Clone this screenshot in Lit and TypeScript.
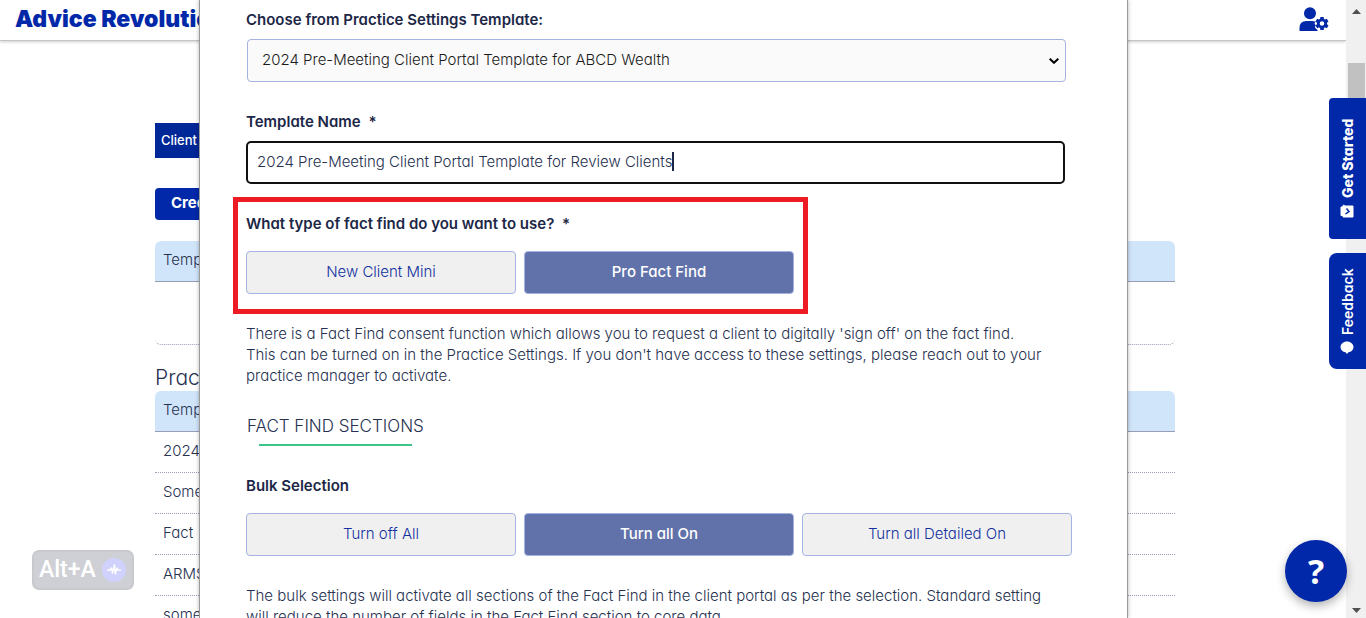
import { LitElement, html, css, svg } from "lit";
import { customElement, property, state } from "lit/decorators.js";
import { classMap } from "lit/directives/class-map.js";

const base = css`
  * {
    box-sizing: border-box;
  }
  button,
  input,
  select {
    font: inherit;
    color: inherit;
    margin: 0;
  }
  h1,
  h2,
  p {
    margin: 0;
    font-weight: inherit;
  }
`;

@customElement("choice-group")
class ChoiceGroup extends LitElement {
  @property({ attribute: false }) options: string[] = [];
  @property() value = "";
  @property({ type: Number }) columns = 3;

  static styles = [
    base,
    css`
      :host {
        display: block;
      }
      .row {
        display: grid;
        gap: 8px;
      }
      .two {
        grid-template-columns: repeat(2, 1fr);
      }
      .three {
        grid-template-columns: repeat(3, 1fr);
      }
      .choice {
        height: 43px;
        padding: 0 8px 2px;
        border: 1px solid #a4b3e2;
        border-radius: 4px;
        background: #f0f0f0;
        color: #12309f;
        cursor: pointer;
      }
      .choice.on {
        background: #6072a9;
        color: #fff;
        font-weight: 500;
      }
    `,
  ];

  render() {
    return html`<div
      class=${classMap({ row: true, two: this.columns === 2, three: this.columns === 3 })}
      role="group"
    >
      ${this.options.map(
        (o) => html`<button
          type="button"
          class=${classMap({ choice: true, on: o === this.value })}
          aria-pressed=${o === this.value}
          @click=${() => (this.value = o)}
        >${o}</button>`
      )}
    </div>`;
  }
}

@customElement("template-dialog")
class TemplateDialog extends LitElement {
  @state() name = "2024 Pre-Meeting Client Portal Template for Review Clients";

  static styles = [
    base,
    css`
      :host {
        display: block;
        background: #fff;
        border: solid #9a9a9a;
        border-width: 0 1px;
        box-shadow: 0 0 4px rgba(0, 0, 0, 0.3);
        overflow: hidden;
        padding: 9px 55px 0 46px;
        font-size: 15px;
        line-height: 21px;
        color: #263150;
      }
      form {
        display: flex;
        flex-direction: column;
        gap: 30px;
      }
      .field {
        display: flex;
        flex-direction: column;
        gap: 9px;
        margin-right: 7px;
      }
      .field + .field,
      .marked {
        margin-top: -1px;
      }
      .label {
        display: block;
        font-size: 15px;
        font-weight: 600;
        color: #1c2747;
      }
      .star {
        margin-left: 4px;
      }
      .picker {
        display: grid;
        align-items: center;
        margin: 0 -1px 0 1px;
      }
      .picker > * {
        grid-area: 1 / 1;
      }
      .picker select {
        appearance: none;
        width: 100%;
        height: 43px;
        padding: 0 32px 2px 14px;
        border: 1px solid #a4b3e2;
        border-radius: 4px;
        background: #fafafa;
        color: #1a1a1a;
      }
      .picker svg {
        justify-self: end;
        margin-right: 7px;
        pointer-events: none;
      }
      .textbox {
        display: flex;
        align-items: center;
        height: 43px;
        padding: 0 9px 2px;
        border: 2px solid #101010;
        border-radius: 5px;
      }
      .textbox input {
        field-sizing: content;
        border: 0;
        padding: 0;
        outline: 0;
        background: none;
        max-width: 100%;
      }
      .caret {
        width: 2px;
        height: 19px;
        background: #1c2747;
      }
      .group {
        display: flex;
        flex-direction: column;
        gap: 17px;
      }
      .marked {
        position: relative;
        width: calc((100% - 16px) * 2 / 3 + 8px);
      }
      .marked::after {
        content: "";
        position: absolute;
        inset: -16px -14px -20px -13px;
        border: 5px solid #ed1c24;
        pointer-events: none;
      }
      .note {
        margin-top: -1px;
      }
      .sections {
        align-self: flex-start;
        margin-top: -2px;
        padding-left: 1px;
        font-size: 17px;
        line-height: 24px;
      }
      .sections::after {
        content: "";
        display: block;
        height: 2px;
        margin: 6px 12px 0;
        background: #3cc48a;
      }
      .sections + .group {
        margin-top: -1px;
      }
    `,
  ];

  render() {
    return html`<form @submit=${(e: Event) => e.preventDefault()}>
      <div class="field">
        <label class="label" for="source">Choose from Practice Settings Template:</label>
        <div class="picker">
          <select id="source">
            <option>2024 Pre-Meeting Client Portal Template for ABCD Wealth</option>
          </select>
          <svg width="10" height="6" viewBox="0 0 10 6" fill="none" stroke="#000" stroke-width="2">
            <path d="M.7.7 5 4.8 9.3.7" />
          </svg>
        </div>
      </div>
      <div class="field">
        <label class="label" for="name">Template Name <span class="star">*</span></label>
        <div class="textbox">
          <input
            id="name"
            type="text"
            required
            .value=${this.name}
            @input=${(e: Event) => (this.name = (e.target as HTMLInputElement).value)}
          /><span class="caret"></span>
        </div>
      </div>
      <div class="group marked">
        <span class="label">What type of fact find do you want to use? <span class="star">*</span></span>
        <choice-group
          .columns=${2}
          .options=${["New Client Mini", "Pro Fact Find"]}
          value="Pro Fact Find"
        ></choice-group>
      </div>
      <p class="note">
        There is a Fact Find consent function which allows you to request a client to digitally 'sign off' on the fact find.<br />
        This can be turned on in the Practice Settings. If you don't have access to these settings, please reach out to your<br />
        practice manager to activate.
      </p>
      <h2 class="sections">FACT FIND SECTIONS</h2>
      <div class="group">
        <span class="label">Bulk Selection</span>
        <choice-group
          .columns=${3}
          .options=${["Turn off All", "Turn all On", "Turn all Detailed On"]}
          value="Turn all On"
        ></choice-group>
      </div>
      <p class="note">
        The bulk settings will activate all sections of the Fact Find in the client portal as per the selection. Standard setting<br />
        will reduce the number of fields in the Fact Find section to core data.
      </p>
    </form>`;
  }
}

const teeth = [0, 60, 120, 180, 240, 300].map(
  (a) => svg`<rect x="21.2" y="9.9" width="3.6" height="4" rx=".6" transform="rotate(${a} 23 16.5)"/>`
);

@customElement("app-root")
class AppRoot extends LitElement {
  static styles = [
    base,
    css`
      :host {
        display: flex;
        position: relative;
        height: 100vh;
        overflow: hidden;
        background: #fff;
        color: #263150;
        font-family: Inter, "Open Sans", sans-serif;
        font-feature-settings: "cv11";
        font-size: 15px;
        font-weight: 300;
        line-height: 20px;
      }
      .page {
        flex: 1;
        min-width: 0;
      }
      header {
        display: flex;
        align-items: center;
        justify-content: space-between;
        height: 41px;
        padding: 0 16px 2px 15px;
        border-bottom: 1px solid #c4c4c4;
        box-shadow: 0 1px 3px rgba(0, 0, 0, 0.2);
      }
      .brand {
        font-size: 23px;
        line-height: 28px;
        font-weight: 900;
        color: #0028a8;
        text-decoration: none;
      }
      .account {
        display: flex;
        border: 0;
        padding: 0;
        background: none;
      }
      main {
        width: 1020px;
        max-width: 100%;
        margin: 82px auto 0;
      }
      .content {
        padding-right: 16px;
      }
      .tab {
        display: block;
        height: 35px;
        width: 120px;
        padding: 0 6px 2px;
        border: 0;
        background: #002797;
        color: #fff;
        font-size: 13px;
        font-weight: 500;
        text-align: left;
      }
      .create {
        display: block;
        height: 32px;
        margin: 30px 0 21px;
        padding: 0 16px 2px;
        border: 0;
        border-radius: 4px;
        background: #0028a8;
        color: #fff;
        font-size: 15px;
        font-weight: 700;
      }
      table {
        width: 100%;
        border-collapse: separate;
        border-spacing: 0;
      }
      th,
      td {
        height: 41px;
        padding: 0 8px 2px;
        text-align: left;
        font-weight: inherit;
      }
      th {
        background: #d1e5fa;
        border-bottom: 1px solid #989fb5;
        border-radius: 6px 6px 0 0;
      }
      td {
        border-bottom: 1px dotted #989fb5;
      }
      .empty td {
        height: 63px;
        border-radius: 0 0 6px 6px;
      }
      .title {
        margin-top: 20px;
        font-size: 21px;
        line-height: 26px;
      }
      .scroll {
        display: flex;
        flex-direction: column;
        justify-content: space-between;
        align-items: center;
        width: 20px;
        padding: 9px 0 5px;
        background: #f0f0f0;
      }
      .thumb {
        width: 17px;
        height: 150px;
        margin: 49px 0 auto;
        background: #c1c1c1;
      }
      template-dialog {
        position: absolute;
        top: 0;
        bottom: 0;
        left: 199px;
        right: 238px;
      }
      .side {
        position: absolute;
        top: 98px;
        right: 0;
        display: flex;
        flex-direction: column;
        gap: 14px;
      }
      .side button {
        display: flex;
        align-items: center;
        justify-content: center;
        gap: 6px;
        width: 37px;
        height: 141px;
        padding: 0;
        border: 0;
        border-radius: 0 4px 4px 0;
        background: #0028a8;
        color: #fff;
        font-size: 14px;
        font-weight: 800;
        writing-mode: vertical-rl;
        transform: rotate(180deg);
      }
      .side .feedback {
        height: 116px;
        border-radius: 0 8px 8px 0;
        font-weight: 600;
      }
      .help {
        position: absolute;
        right: 19px;
        bottom: 16px;
        width: 62px;
        height: 62px;
        padding: 0;
        border: 0;
        border-radius: 50%;
        background: #0028a8;
        color: #fff;
        font-family: "Open Sans", sans-serif;
        font-size: 34px;
        font-weight: 700;
        box-shadow: 0 4px 10px rgba(0, 0, 0, 0.3);
      }
      .shortcut {
        position: absolute;
        left: 32px;
        bottom: 28px;
        display: flex;
        align-items: center;
        justify-content: space-between;
        width: 102px;
        height: 40px;
        padding: 0 6px 0 5px;
        border: 2px solid #c8c9cc;
        border-radius: 7px;
        background: #cfd0d5;
        color: #fff;
        font-family: Roboto, sans-serif;
        font-size: 23px;
        font-weight: 500;
      }
    `,
  ];

  render() {
    return html`
      <div class="page">
        <header>
          <a class="brand" href="#">Advice Revolution</a>
          <button class="account" type="button" aria-label="Account settings">
            <svg width="31" height="25" viewBox="0 0 31 25" fill="#0028a8">
              <circle cx="11" cy="6.2" r="6" />
              <path d="M.5 24V21q0-7 7-7H13q2 0 3.5.8l-1 2 1.2 1.500-.8 2.200L18.500 23v1z" />
              <g>${teeth}</g>
              <circle cx="23" cy="16.5" r="3.7" fill="none" stroke="#0028a8" stroke-width="2.8" />
            </svg>
          </button>
        </header>
        <div class="content">
          <main>
            <button class="tab" type="button">Client</button>
            <button class="create" type="button">Create</button>
            <table>
              <thead><tr><th>Template</th></tr></thead>
              <tbody class="empty"><tr><td></td></tr></tbody>
            </table>
            <h1 class="title">Practice</h1>
            <table>
              <thead><tr><th>Template</th></tr></thead>
              <tbody>
                ${["2024", "Some", "Fact", "ARMS", "some"].map((t) => html`<tr><td>${t}</td></tr>`)}
              </tbody>
            </table>
          </main>
        </div>
      </div>
      <div class="scroll">
        <svg width="9" height="5" fill="#505050"><path d="M0 5 4.5 0 9 5z" /></svg>
        <div class="thumb"></div>
        <svg width="9" height="5" fill="#505050"><path d="M0 0h9L4.5 5z" /></svg>
      </div>
      <template-dialog></template-dialog>
      <div class="side">
        <button type="button">
          <svg width="14" height="14" viewBox="0 0 14 14">
            <path d="M1 1h10v1.500h2V11h-1.500l-1 2-1.500-1H1z" fill="#fff" stroke="#fff" stroke-linejoin="round" />
            <path d="M8.500 4 5 6.500 7.500 9.500" fill="none" stroke="#0028a8" stroke-width="1.500" />
          </svg>
          Get Started
        </button>
        <button class="feedback" type="button">
          <svg width="14" height="13" viewBox="0 0 14 13" fill="#fff">
            <path d="M13.500 7c0 3-2.800 5.500-6.500 5.500S.5 10 .5 7c0-2.700 2-4.800 5-5.300L7 0l1.500 1.700c3 .5 5 2.600 5 5.300z" />
          </svg>
          Feedback
        </button>
      </div>
      <button class="help" type="button" aria-label="Help">?</button>
      <div class="shortcut">
        Alt+A
        <svg width="24" height="24" viewBox="0 0 24 24">
          <circle cx="12" cy="12" r="12" fill="#d0d2fd" />
          <path d="M5 12h3l1.500-2 1 5 2-8 .8 9 1.700-6 1 2h3" fill="none" stroke="#fff" stroke-width="1.500" stroke-linejoin="round" />
        </svg>
      </div>
    `;
  }
}
